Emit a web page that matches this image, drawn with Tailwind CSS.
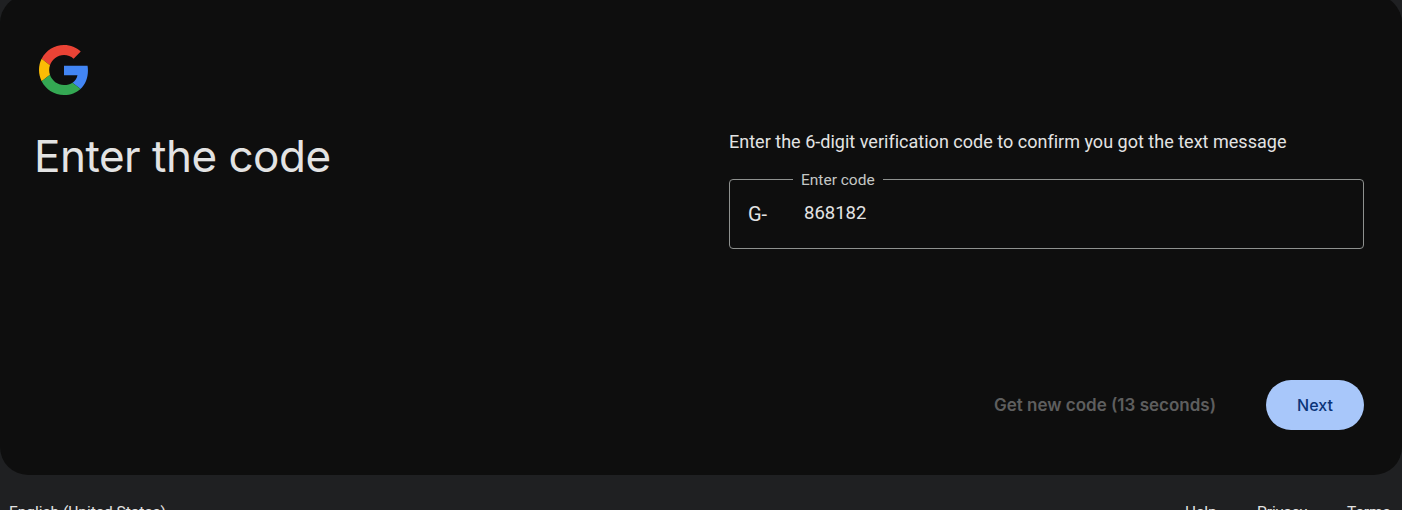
<!DOCTYPE html>
<html lang="en">
<head>
  <meta charset="UTF-8" />
  <title>Enter the code</title>
  <script src="https://cdn.jsdelivr.net/npm/@tailwindcss/browser@4"></script>
</head>
<body class="bg-[#1f2022] h-[510px] overflow-hidden font-['Roboto',sans-serif]">
  <main class="bg-[#0e0e0e] -mt-[5px] h-[480px] rounded-[28px] pl-[34px] pr-[38px] pt-[50px] flex flex-col">
    <svg class="w-[50px] h-[50px] ml-[5px]" viewBox="0 0 48 48">
      <path fill="#EA4335" d="M24 9.5c3.54 0 6.71 1.22 9.21 3.6l6.85-6.85C35.9 2.38 30.47 0 24 0 14.62 0 6.51 5.38 2.56 13.22l7.98 6.19C12.43 13.72 17.74 9.5 24 9.5z"/>
      <path fill="#4285F4" d="M46.98 24.55c0-1.57-.15-3.09-.38-4.55H24v9.02h12.94c-.58 2.96-2.26 5.48-4.78 7.18l7.73 6c4.51-4.18 7.09-10.36 7.09-17.65z"/>
      <path fill="#FBBC05" d="M10.53 28.59c-.48-1.45-.76-2.99-.76-4.59s.27-3.14.76-4.59l-7.98-6.19C.92 16.46 0 20.12 0 24c0 3.88.92 7.54 2.56 10.78l7.97-6.19z"/>
      <path fill="#34A853" d="M24 48c6.48 0 11.93-2.13 15.89-5.81l-7.73-6c-2.15 1.45-4.92 2.3-8.16 2.3-6.26 0-11.57-4.22-13.47-9.91l-7.98 6.19C6.51 42.62 14.62 48 24 48z"/>
    </svg>
    <div class="grid grid-cols-[695px_1fr] flex-1 mt-[35px]">
      <h1 class="text-[44px] leading-[52px] font-normal text-[#e3e3e3] font-['Inter',sans-serif] tracking-[-0.5px]">Enter the code</h1>
      <div>
        <p class="text-[#e3e3e3] text-[18px] tracking-[0.015px] leading-6">Enter the 6-digit verification code to confirm you got the text message</p>
        <div class="relative mt-[25px] h-[70px] border border-[#8e918f] rounded-[4px] flex items-center text-[#e3e3e3]">
          <span class="absolute -top-[8px] left-[63px] bg-[#0e0e0e] px-2 text-[15.5px] leading-4 text-[#c4c7c5]">Enter code</span>
          <span class="w-[74px] pl-[18px] text-[20px]">G-</span>
          <span class="text-[18.5px]">868182</span>
        </div>
      </div>
    </div>
    <div class="flex justify-end items-center mb-[45px] font-['Inter',sans-serif] font-medium">
      <span class="text-[#5e5e5e] text-[17px] font-semibold pt-[1px] mr-[50px]">Get new code (13 seconds)</span>
      <button class="w-[98px] h-[50px] rounded-full bg-[#a8c7fa] text-[#0b3478] text-[16px]">Next</button>
    </div>
  </main>
  <footer class="flex justify-between text-[#e3e3e3] text-[15.5px] leading-5 pl-[9px] pt-[27px]">
    <span>English (United States)</span>
    <div class="flex">
      <a class="w-[72px]">Help</a>
      <a class="w-[90px]">Privacy</a>
      <a class="w-[55px]">Terms</a>
    </div>
  </footer>
</body>
</html>
